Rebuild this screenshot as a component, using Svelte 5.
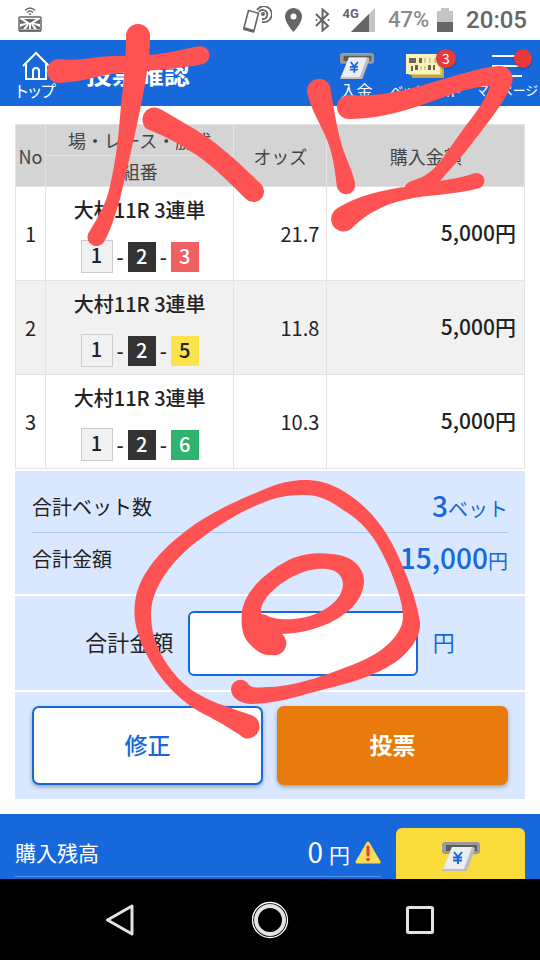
<script>
  const bets = [
    { no: 1, race: "大村11R 3連単", boats: [1, 2, 3], odds: "21.7", amount: "5,000円" },
    { no: 2, race: "大村11R 3連単", boats: [1, 2, 5], odds: "11.8", amount: "5,000円" },
    { no: 3, race: "大村11R 3連単", boats: [1, 2, 6], odds: "10.3", amount: "5,000円" },
  ];

  let total = "";
</script>

{#snippet depositIcon(width, height)}
  <svg {width} {height} viewBox="0 0 38 30" aria-hidden="true">
    <rect x="0" y="0" width="38" height="12" rx="3" fill="#9a9a9a" />
    <rect x="4" y="3" width="31" height="6" fill="#5c5c5c" />
    <path d="M10 5h22l1 2-8 22H0z" fill="#bdbdbd" />
    <path d="M10 5h20l-8 22H1z" fill="#ededed" />
    <path
      d="M12 10l4 5 4-5M16 15v7M11 15.500h9M11 18.500h9"
      fill="none"
      stroke="#1768da"
      stroke-width="2"
    />
  </svg>
{/snippet}

<div class="screen">
  <div class="status">
    <svg width="24" height="26" viewBox="0 0 24 26" fill="none" stroke="#666">
      <rect x="1" y="10" width="22" height="14" rx="1" stroke-width="1.500" />
      <path d="M1 23.500h22" stroke-width="2" />
      <path d="M7 3.500q5-5 10 0M9 5.500q3-3 6 0M11 7.500q1-1 2 0" stroke-width="1.400" />
      <path d="M2 12l6 4-6 1zM6 12h12l-6 4zM22 12l-6 4 6 1zM2 22v-2l7-3-4 5zM22 22v-2l-7-3 4 5zM8 22l3-5v5zM16 22l-3-5v5z" fill="#666" stroke="none" />
    </svg>
    <div class="status-right">
      <svg width="29" height="28" viewBox="0 0 29 28" fill="none" stroke="#666">
        <path d="M5.500 4.500l10 2.700-4.800 18.500-10-2.700z" stroke-width="1.600" stroke-linejoin="round" />
        <path d="M1 21l10 2.700-.5 3-10-2.700z" fill="#666" stroke="none" />
        <circle cx="20" cy="8" r="2" fill="#666" stroke="none" />
        <path d="M16 6a4.500 4.500 0 1 1 3 7M14 4a8 8 0 1 1 5 12" stroke-width="1.800" />
      </svg>
      <svg width="17" height="24" viewBox="0 0 17 24">
        <path d="M8.500 0A8.300 8.300 0 0 0 0 8.500C0 15 8.500 24 8.500 24S17 15 17 8.500A8.300 8.300 0 0 0 8.500 0zm0 5.500a3 3 0 1 1 0 6 3 3 0 0 1 0-6z" fill="#666" />
      </svg>
      <svg width="15" height="24" viewBox="0 0 15 24" fill="none" stroke="#666" stroke-width="2">
        <path d="M1 6l12 12-5.500 4.500v-21L13 6 1 18" />
        <circle cx="1.500" cy="12" r="1" fill="#666" stroke="none" />
        <circle cx="13.500" cy="12" r="1" fill="#666" stroke="none" />
      </svg>
      <div class="signal">
        <span>4G</span>
        <svg width="24" height="24" viewBox="0 0 24 24">
          <path d="M24 0v24H0z" fill="#c4c4c4" />
          <path d="M18 6v18H0z" fill="#666" />
        </svg>
      </div>
      <div class="battery">
        <span>47%</span>
        <svg width="16" height="24" viewBox="0 0 16 24">
          <path d="M0 3h4V0h8v3h4v11H0z" fill="#c4c4c4" />
          <path d="M0 14h16v10H0z" fill="#666" />
        </svg>
      </div>
      <time>20:05</time>
    </div>
  </div>

  <header>
    <a class="item" href="#top">
      <svg width="28" height="30" viewBox="0 0 28 30" fill="none" stroke="#fff" stroke-width="2">
        <path d="M1 15L14 2l13 13M4 13v15h20V13M11 28V20a3 3 0 0 1 6 0v8" />
      </svg>
      <span>トップ</span>
    </a>
    <h1>投票確認</h1>
    <nav>
      <a class="item" href="#deposit">
        <span class="icon">{@render depositIcon(34, 27)}</span>
        <span>入金</span>
      </a>
      <a class="item list" href="#betlist">
        <span class="icon">
          <svg width="38" height="26" viewBox="0 0 38 26">
            <path d="M4 5h34v20H6z" fill="#c5a546" />
            <path d="M2 2h34v20H3z" fill="#e2cb72" />
            <path d="M0 1h34v20H0z" fill="#fdf2bd" />
            <path d="M3 5h7v5H3zM13 5h3v5h-3zM5 13h2v5H5zM9 12h3v5H9zM22 12h3v5h-3zM27 12h2v5h-2z" fill="#6b6553" />
            <path d="M18 5h2v5h-2zM23 5h2v5h-2zM28 5h2v5h-2zM14 13h2v4h-2zM18 13h2v4h-2z" fill="#d9cb91" />
          </svg>
          <b class="badge">3</b>
        </span>
        <span>ベットリスト</span>
      </a>
      <a class="item mypage" href="#mypage">
        <span class="icon">
          <svg width="30" height="26" viewBox="0 0 30 26" stroke="#fff" stroke-width="2">
            <path d="M0 3h30M0 13h30M0 23h30" />
          </svg>
          <b class="badge dot"></b>
        </span>
        <span>マイページ</span>
      </a>
    </nav>
  </header>

  <main>
    <table>
      <colgroup>
        <col class="no" />
        <col class="race" />
        <col class="odds" />
        <col />
      </colgroup>
      <thead>
        <tr>
          <th rowspan="2">No</th>
          <th>場・レース・勝式</th>
          <th rowspan="2">オッズ</th>
          <th rowspan="2">購入金額</th>
        </tr>
        <tr>
          <th>組番</th>
        </tr>
      </thead>
      <tbody>
        {#each bets as bet (bet.no)}
          <tr>
            <td class="num">{bet.no}</td>
            <td class="combo">
              <p>{bet.race}</p>
              <div class="boats">
                {#each bet.boats as boat, i}
                  {#if i > 0}<span>-</span>{/if}
                  <b class="boat boat-{boat}">{boat}</b>
                {/each}
              </div>
            </td>
            <td class="rate">{bet.odds}</td>
            <td class="amount">{bet.amount}</td>
          </tr>
        {/each}
      </tbody>
    </table>

    <section class="totals">
      <dl>
        <dt>合計ベット数</dt>
        <dd><strong>3</strong>ベット</dd>
      </dl>
      <dl>
        <dt>合計金額</dt>
        <dd><strong>15,000</strong>円</dd>
      </dl>
    </section>
    <section class="entry">
      <label for="total">合計金額</label>
      <input id="total" type="text" inputmode="numeric" bind:value={total} />
      <span>円</span>
    </section>
    <section class="actions">
      <button type="button" class="edit">修正</button>
      <button type="button" class="vote">投票</button>
    </section>
  </main>

  <footer>
    <div class="balance">
      <span>購入残高</span>
      <span class="value"><strong>0</strong>円</span>
      <svg width="26" height="23" viewBox="0 0 26 23">
        <path d="M13 2L24 21H2z" fill="#f9dd55" stroke="#f9dd55" stroke-width="3" stroke-linejoin="round" />
        <path d="M13 6v8" stroke="#e6393c" stroke-width="3" stroke-linecap="round" />
        <circle cx="13" cy="18.500" r="1.800" fill="#e6393c" />
      </svg>
    </div>
    <button type="button" class="deposit" aria-label="入金">{@render depositIcon(38, 30)}</button>
  </footer>

  <div class="keys">
    <button type="button" aria-label="戻る">
      <svg width="32" height="38" viewBox="0 0 32 38">
        <path d="M28 5v28L3.500 19z" fill="none" stroke="#e3e3e3" stroke-width="3" stroke-linejoin="round" />
      </svg>
    </button>
    <button type="button" aria-label="ホーム">
      <svg width="38" height="38" viewBox="0 0 38 38" fill="none">
        <circle cx="19" cy="19" r="17.500" stroke="#fff" stroke-width="1.300" />
        <circle cx="19" cy="19" r="14" stroke="#e3e3e3" stroke-width="4" />
      </svg>
    </button>
    <button type="button" aria-label="履歴">
      <svg width="32" height="38" viewBox="0 0 32 38">
        <rect x="3.500" y="6.500" width="25" height="25" rx="1" fill="none" stroke="#e3e3e3" stroke-width="3" />
      </svg>
    </button>
  </div>

  <svg class="marker" viewBox="0 0 540 960" fill="#ff5252" aria-hidden="true">
    <path d="M59 59C66 60 75 60 84 59C108 55 128 56 147 55C168 54 182 49 198 46.500A8.800 8.800 0 0 1 203 64C180 69 150 70 120 73C98 75 84 82 59 83A12 12 0 0 1 59 59z" />
    <path d="M126 36A12 12 0 0 1 150 36C150 60 145 85 140 110C135 135 128 165 120 199C115 216 110 232 104 242A9 9 0 0 1 88 234C98 217 106 205 110 186C117 156 119 130 121 105C124 80 126 60 126 36z" />
    <path d="M162 110C177 119 192 127 207 137C227 151 245 169 261 184A10 10 0 0 1 246 199C231 184 216 169 198 156C180 144 165 136 147 129A12 12 0 0 1 162 110z" />
    <path d="M307 91A12 12 0 0 1 330 86C334 108 337 132 344 152C349 165 353 173 355 183A9 9 0 0 1 337 187C334 162 332 150 324 133C316 116 309 104 307 91z" />
    <path d="M349 95C377 97 405 91 430 83C455 76 477 68 498 66A13 13 0 0 1 512 83C506 100 489 121 476 138C462 157 451 168 440 181C452 179 464 177 475 173A8 8 0 0 1 480 188C455 195 429 194 404 200C383 205 368 213 353 227A12 12 0 1 1 334 211C350 198 381 190 405 187C406 182 412 181 420 178C437 171 447 151 457 138C470 119 484 105 490 86C463 87 432 103 406 110C389 115 369 119 349 119A12 12 0 0 1 349 95z" />
    <path
      fill-rule="evenodd"
      d="M244 738C232 729 214 719 200 712C174 697 154 672 143 647C136 631 133 616 135 603C138 574 162 549 187 530C212 511 241 499 270 487C283 482 294 480 305 480C328 480 344 490 360 503C380 520 393 542 403 567C411 586 417 603 420 622C421 634 414 646 402 657C376 679 335 686 303 695C286 700 266 704 250 704C240 703 231 698 231 689A9.500 9.500 0 0 1 249 685C254 689 262 687 270 687C298 686 332 673 357 663C379 654 396 641 402 624C406 610 396 583 387 563C378 543 366 523 343 510C332 502 321 495 305 495C292 495 281 496 270 500C241 510 212 529 190 547C168 566 150 591 151 617C152 644 166 666 182 682C201 700 226 706 251 715A12 12 0 0 1 244 738z"
    />
    <path
      fill-rule="evenodd"
      d="M248 642C241 634 241 621 242 611C246 588 271 568 293 558C308 552 327 552 343 556C357 560 365 572 364 583C362 600 351 611 335 620C319 629 302 633 282 634A12 12 0 0 1 272 655C262 656 254 649 248 642zM261 609C264 595 281 583 290 578C305 570 316 568 327 569C338 570 343 577 343 585C342 597 332 606 320 612C304 620 283 621 270 617C266 615 264 614 261 614z"
    />
  </svg>
</div>

<style>
  :global(body) {
    margin: 0;
    background: #fff;
  }

  .screen {
    position: relative;
    display: flex;
    flex-direction: column;
    min-height: 100vh;
    overflow: hidden;
    background: #fff;
    color: #222;
    font-family: "Noto Sans CJK JP", sans-serif;
    font-size: 20px;
    line-height: 28px;
  }

  svg {
    display: block;
    flex: none;
  }

  a {
    color: inherit;
    text-decoration: none;
  }

  button {
    margin: 0;
    padding: 0;
    border: none;
    background: none;
    font: inherit;
    cursor: pointer;
  }

  .status {
    display: flex;
    align-items: center;
    justify-content: space-between;
    box-sizing: border-box;
    height: 40px;
    padding: 0 13px 0 18px;
    color: #666;
    font-family: Roboto, sans-serif;
    font-size: 24px;
    font-weight: 500;
  }

  .status-right {
    display: flex;
    align-items: center;
    gap: 13px;
  }

  .signal {
    display: flex;
    align-items: center;
  }

  .signal span {
    align-self: flex-start;
    margin-right: -8px;
    font-size: 13px;
    font-weight: 700;
    line-height: 12px;
  }

  .battery {
    display: flex;
    align-items: center;
    gap: 8px;
    color: #8a8a8a;
    font-size: 22px;
  }

  header {
    display: flex;
    align-items: center;
    box-sizing: border-box;
    height: 66px;
    padding: 0 2px 0 16px;
    background: #1768da;
    color: #fff;
  }

  h1 {
    flex: 1;
    margin: 0 0 0 30px;
    font-size: 26px;
    font-weight: 700;
    white-space: nowrap;
  }

  nav {
    display: flex;
    gap: 16px;
  }

  .item {
    display: flex;
    flex-direction: column;
    align-items: center;
    padding-top: 4px;
    font-size: 16px;
    line-height: 18px;
    font-feature-settings: "palt";
    white-space: nowrap;
  }

  .list {
    font-size: 14px;
  }

  .mypage {
    font-size: 13px;
  }

  .icon {
    position: relative;
    display: flex;
    align-items: center;
    height: 30px;
  }

  .badge {
    position: absolute;
    top: -2px;
    right: -12px;
    width: 20px;
    height: 19px;
    border-radius: 10px;
    background: #e6393c;
    box-shadow: 0 1px 2px rgba(0, 0, 0, 0.3);
    font-size: 14px;
    font-weight: 400;
    text-align: center;
  }

  .dot {
    right: -10px;
    width: 18px;
  }

  main {
    flex: 1;
    padding: 18px 15px 15px;
  }

  table {
    width: 100%;
    border-collapse: collapse;
    table-layout: fixed;
  }

  .no {
    width: 30px;
  }

  .race {
    width: 37%;
  }

  .odds {
    width: 93px;
  }

  th,
  td {
    padding: 0;
    border: 1px solid #e3e3e3;
  }

  th {
    height: 30px;
    background: #d4d4d4;
    color: #444;
    font-size: 18px;
    font-weight: 400;
  }

  tbody tr:nth-child(even) {
    background: #f1f1f1;
  }

  .num {
    text-align: center;
  }

  .combo {
    padding: 9px 0 7px;
    font-weight: 500;
  }

  .combo p {
    margin: 0 0 16px;
    text-align: center;
  }

  .boats {
    display: flex;
    align-items: center;
    justify-content: center;
    gap: 4px;
    line-height: 28px;
  }

  .boat {
    width: 28px;
    height: 30px;
    background: #333;
    color: #fff;
    font-weight: 500;
    text-align: center;
  }

  .boat-1 {
    width: 30px;
    height: 31px;
    border: 1px solid #ccc;
    background: #f1f1f1;
    color: #222;
  }

  .boat-3 {
    background: #f26161;
  }

  .boat-5 {
    background: #fae34c;
    color: #222;
  }

  .boat-6 {
    background: #2fb36d;
  }

  .rate {
    padding-right: 7px;
    text-align: right;
  }

  .amount {
    padding-right: 8px;
    padding-bottom: 4px;
    font-size: 21px;
    font-weight: 500;
    text-align: right;
  }

  section {
    margin-top: 2px;
    background: #d9e8ff;
  }

  .totals {
    padding: 10px 17px;
  }

  dl {
    display: flex;
    align-items: center;
    justify-content: space-between;
    height: 51px;
    margin: 0;
  }

  dl + dl {
    border-top: 1px solid #a9c9f7;
  }

  dd {
    margin: 0;
    color: #1768da;
  }

  strong {
    font-size: 28px;
    font-weight: 500;
  }

  .entry {
    display: flex;
    align-items: center;
    justify-content: center;
    gap: 15px;
    padding: 15px 0 14px;
    font-size: 22px;
  }

  .entry label,
  .entry span {
    padding-bottom: 6px;
  }

  .entry span {
    color: #1768da;
  }

  input {
    box-sizing: border-box;
    width: 45%;
    height: 65px;
    padding: 0 12px;
    border: 2px solid #1768da;
    border-radius: 6px;
    background: #fff;
    font: inherit;
  }

  .actions {
    display: flex;
    gap: 14px;
    padding: 14px 17px;
  }

  .actions button {
    box-sizing: border-box;
    flex: 1;
    height: 79px;
    padding-bottom: 4px;
    border: 2px solid #1768da;
    border-radius: 7px;
    box-shadow: 0 2px 4px rgba(0, 0, 0, 0.3);
    background: #fff;
    color: #1768da;
    font-size: 23px;
    font-weight: 500;
  }

  .actions .vote {
    border-color: #e87b0c;
    background: #e87b0c;
    color: #fff;
    font-weight: 700;
  }

  footer {
    display: flex;
    gap: 15px;
    padding: 14px 15px 0;
    background: #1768da;
    color: #fff;
    font-size: 21px;
  }

  .balance {
    display: flex;
    flex: 1;
    align-items: center;
    height: 48px;
    margin-bottom: 2px;
    border-bottom: 1px solid #5a92e4;
  }

  .value {
    flex: 1;
    margin-right: 5px;
    text-align: right;
  }

  .value strong {
    margin-right: 6px;
    font-weight: 400;
  }

  .deposit {
    display: flex;
    justify-content: center;
    width: 129px;
    padding-top: 14px;
    border-radius: 6px 6px 0 0;
    background: #f9dc3c;
  }

  .keys {
    display: flex;
    justify-content: center;
    align-items: center;
    gap: 115px;
    height: 81px;
    background: #000;
  }

  .marker {
    position: absolute;
    top: 0;
    left: 0;
    width: 100%;
    height: auto;
    pointer-events: none;
  }
</style>
